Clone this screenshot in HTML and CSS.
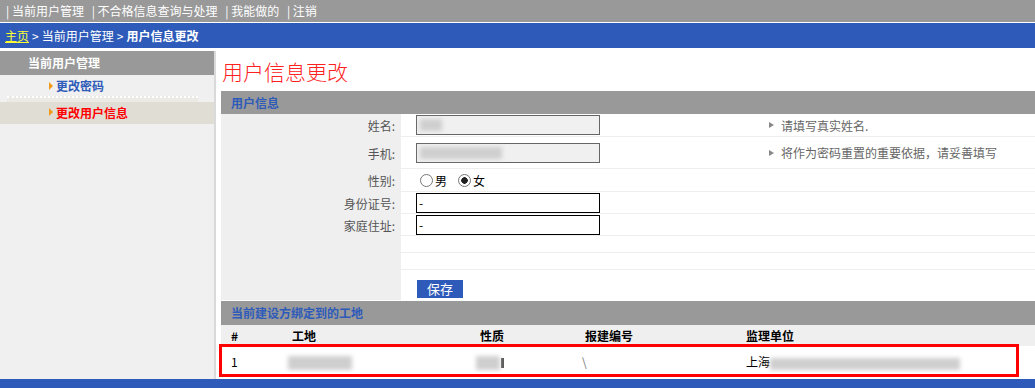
FILE: index.html
```html
<!DOCTYPE html>
<html lang="zh-CN">
<head>
<meta charset="utf-8">
<title>用户信息更改</title>
<link rel="stylesheet" href="styles.css">
</head>
<body>
<div class="topnav">
  <span class="nav-item">| 当前用户管理</span>
  <span class="nav-item">| 不合格信息查询与处理</span>
  <span class="nav-item">| 我能做的</span>
  <span class="nav-item">| 注销</span>
</div>
<div class="crumb">
  <a class="crumb-home">主页</a><span class="crumb-sep">&gt;</span>当前用户管理<span class="crumb-sep">&gt;</span><b>用户信息更改</b>
</div>
<div class="main">
  <div class="sidebar">
    <div class="side-head">当前用户管理</div>
    <div class="side-item side-item-first"><span class="side-arrow"></span><span class="side-link">更改密码</span></div>
    <div class="side-sep"></div>
    <div class="side-item side-item-active"><span class="side-arrow"></span><span class="side-link">更改用户信息</span></div>
  </div>
  <div class="content">
    <div class="page-title">用户信息更改</div>
    <div class="sec-head">用户信息</div>
    <div class="form">
      <div class="f-label r1">姓名:</div>
      <div class="f-field r1"><div class="inp-ro"><span class="blur blur-name"></span></div></div>
      <div class="f-hint r1"><span class="hint-arrow"></span>请填写真实姓名.</div>

      <div class="f-label r2">手机:</div>
      <div class="f-field r2"><div class="inp-ro"><span class="blur blur-phone"></span></div></div>
      <div class="f-hint r2"><span class="hint-arrow"></span>将作为密码重置的重要依据，请妥善填写</div>

      <div class="f-label r3">性别:</div>
      <div class="f-field r3">
        <label class="radio"><input type="radio" name="sex">男</label>
        <label class="radio"><input type="radio" name="sex" checked>女</label>
      </div>
      <div class="f-hint r3"></div>

      <div class="f-label r4">身份证号:</div>
      <div class="f-field r4"><div class="inp">-</div></div>
      <div class="f-hint r4"></div>

      <div class="f-label r4">家庭住址:</div>
      <div class="f-field r4"><div class="inp">-</div></div>
      <div class="f-hint r4"></div>

      <div class="f-label r5"></div>
      <div class="f-field r5"></div>
      <div class="f-hint r5"></div>

      <div class="f-label r5"></div>
      <div class="f-field r5"></div>
      <div class="f-hint r5"></div>

      <div class="f-label r6"></div>
      <div class="f-field r6 no-line"><span class="btn">保存</span></div>
      <div class="f-hint r6 no-line"></div>
    </div>
    <div class="sec-head sec-head-2">当前建设方绑定到的工地</div>
    <div class="tbl">
      <div class="tr th">
        <div>#</div><div>工地</div><div>性质</div><div>报建编号</div><div>监理单位</div>
      </div>
      <div class="tr td">
        <div>1</div>
        <div><span class="blur blur-site"></span></div>
        <div><span class="blur blur-type"></span><span class="frag"></span></div>
        <div class="slash">\</div>
        <div>上海<span class="blur blur-unit"></span></div>
        <div class="mark"></div>
      </div>
    </div>
  </div>
</div>
<div class="footer"></div>
</body>
</html>
```
FILE: styles.css
```css
* { box-sizing: border-box; }
html, body {
  margin: 0;
  padding: 0;
}
body {
  width: 1035px;
  height: 388px;
  overflow: hidden;
  font-family: "Noto Sans CJK SC", "Liberation Sans", sans-serif;
  font-size: 12px;
  color: #000;
  background: #fff;
}

.topnav {
  height: 23px;
  background: #999;
  border-bottom: 1px solid #fff;
  color: #fff;
  line-height: 22px;
  padding-left: 6px;
  white-space: nowrap;
}
.nav-item { margin-right: 5px; }

.crumb {
  height: 25px;
  background: #2e5bb9;
  color: #fff;
  line-height: 25px;
  padding-left: 5px;
  white-space: nowrap;
}
.crumb-home {
  color: #ffff33;
  text-decoration: underline;
}
.crumb-sep { margin: 0 3px; }
.crumb b { font-weight: bold; }

.main {
  display: flex;
  height: 328px;
  margin-top: 3px;
}

.sidebar {
  width: 216px;
  background: #f0f0f0;
  border-right: 2px solid #dadada;
}
.side-head {
  height: 24px;
  background: #999;
  color: #fff;
  font-weight: bold;
  line-height: 24px;
  padding-left: 28px;
}
.side-item {
  height: 22px;
  display: flex;
  align-items: center;
  padding-left: 49px;
  font-weight: bold;
}
.side-item-first { height: 21px; color: #2e5bb9; }
.side-sep {
  height: 6px;
  margin-right: 16px;
  background: #eceae4;
  border-top: 2px dotted #fff;
  margin-left: 7px;
}
.side-item-active {
  background: #e0ddd5;
  color: #ff0000;
  padding-bottom: 2px;
}
.side-arrow {
  width: 0;
  height: 0;
  border-left: 4px solid #f29a1a;
  border-top: 4px solid transparent;
  border-bottom: 4px solid transparent;
  margin-right: 3px;
}

.content {
  flex: 1;
  padding-left: 5px;
  min-width: 0;
}
.page-title {
  height: 40px;
  line-height: 40px;
  font-size: 21px;
  font-weight: 300;
  color: #ff2020;
  padding-left: 1px;
}
.sec-head {
  height: 23px;
  line-height: 23px;
  background: #999;
  color: #2e5bb9;
  font-weight: bold;
  padding-left: 10px;
}
.sec-head-2 {
  height: 24px;
  line-height: 24px;
  margin-top: 1px;
}

.form {
  display: grid;
  grid-template-columns: 180px 366px 1fr;
}
.f-label {
  background: #efefef;
  color: #555;
  text-align: right;
  padding-right: 6px;
  display: flex;
  align-items: center;
  justify-content: flex-end;
}
.f-field, .f-hint {
  border-bottom: 1px solid #eee;
  display: flex;
  align-items: center;
}
.f-field { padding-left: 15px; }
.no-line { border-bottom: 0; }
.r1 { height: 23px; }
.r2 { height: 32px; }
.r3 { height: 23px; }
.r4 { height: 22px; }
.r5 { height: 17px; }
.r6 { height: 30px; }

.f-hint {
  color: #666;
  white-space: nowrap;
}
.hint-arrow {
  width: 0;
  height: 0;
  border-left: 5px solid #888;
  border-top: 3.5px solid transparent;
  border-bottom: 3.5px solid transparent;
  margin: 0 7px 0 2px;
}

.inp-ro {
  width: 184px;
  height: 20px;
  border: 1px solid #666;
  background: #f0f0f0;
  display: flex;
  align-items: center;
  padding-left: 3px;
}
.inp {
  width: 184px;
  height: 20px;
  border: 1px solid #000;
  background: #fff;
  line-height: 17px;
  padding-left: 2px;
}
.radio {
  display: flex;
  align-items: center;
  margin-right: 7px;
}
.radio input {
  -webkit-appearance: none;
  appearance: none;
  margin: 0 2px 0 4px;
  width: 13px;
  height: 13px;
  border: 1px solid #777;
  border-radius: 50%;
  background: #fff;
}
.radio input:checked {
  background: radial-gradient(circle, #222 0 3px, #fff 3.5px);
}
.btn {
  display: inline-block;
  width: 46px;
  height: 18px;
  line-height: 18px;
  margin-top: 7px;
  margin-left: 1px;
  background: #2e5bb9;
  color: #fff;
  text-align: center;
  font-size: 13px;
}

.blur {
  display: inline-block;
  background: #cfcfcf;
  filter: blur(2px);
  vertical-align: middle;
}
.blur-name { width: 22px; height: 12px; }
.blur-phone { width: 82px; height: 12px; }
.blur-site { width: 64px; height: 14px; margin-left: -4px; }
.blur-type { width: 24px; height: 14px; margin-left: -4px; }
.blur-unit { width: 190px; height: 12px; }
.frag {
  display: inline-block;
  width: 3px;
  height: 10px;
  background: #555;
  vertical-align: middle;
  margin-left: 1px;
}

.tbl { position: relative; }
.tr {
  display: grid;
  grid-template-columns: 61px 188px 105px 161px 1fr;
  padding-left: 10px;
  align-items: center;
  position: relative;
}
.th {
  height: 21px;
  background: #efefef;
  font-weight: bold;
}
.td {
  height: 31px;
  white-space: nowrap;
}
.slash { color: #777; margin-left: -3px; }
.mark {
  position: absolute;
  left: -2px;
  top: -2px;
  width: 800px;
  height: 33px;
  border: 3px solid #ff0000;
}

.footer {
  height: 9px;
  background: #2e5bb9;
}
```
